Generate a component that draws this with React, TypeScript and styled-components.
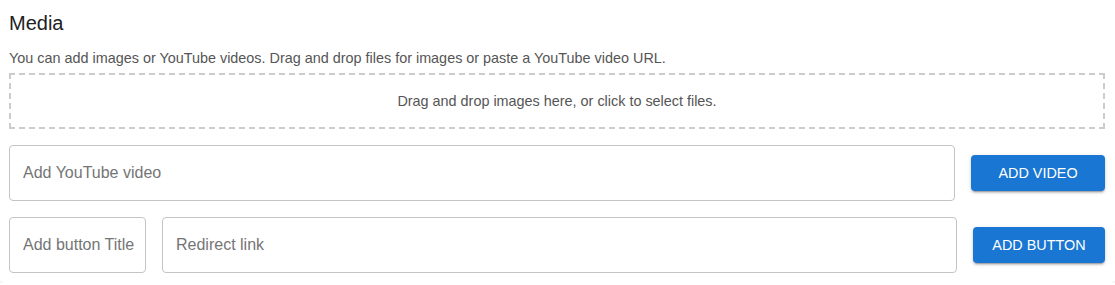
import styled, { createGlobalStyle } from "styled-components";

const GlobalStyle = createGlobalStyle`
  html, body {
    margin: 0;
    padding: 0;
    background: #ffffff;
  }
  body {
    font-family: "Liberation Sans", Arial, sans-serif;
  }
  * {
    box-sizing: border-box;
  }
`;

const App = () => {
  return (
    <>
      <GlobalStyle />
      <Card>
        <Title>Media</Title>
        <Description>
          You can add images or YouTube videos. Drag and drop files for images or paste a YouTube video URL.
        </Description>
        <DropZone>Drag and drop images here, or click to select files.</DropZone>
        <Row>
          <TextInput placeholder="Add YouTube video" />
          <ActionButton $width={134}>Add video</ActionButton>
        </Row>
        <Row>
          <TextInput placeholder="Add button Title" $width={137} />
          <TextInput placeholder="Redirect link" />
          <ActionButton $width={132}>Add button</ActionButton>
        </Row>
      </Card>
    </>
  );
};

export default App;

const Card = styled.div`
  display: flex;
  flex-direction: column;
  padding: 11px 10px 10px 9px;
  background: #ffffff;
  border-radius: 0 0 4px 4px;
  box-shadow: 0 1px 2px rgba(0, 0, 0, 0.12);
`;

const Title = styled.h2`
  margin: 0;
  font-size: 20px;
  line-height: 24px;
  font-weight: 400;
  color: #212121;
`;

const Description = styled.p`
  margin: 13px 0 5px;
  font-size: 14.4px;
  line-height: 20px;
  color: #555555;
`;

const DropZone = styled.div`
  display: flex;
  align-items: center;
  justify-content: center;
  flex: none;
  height: 56px;
  border: 2px dashed #cccccc;
  font-size: 14.4px;
  color: #555555;
  cursor: pointer;
`;

const Row = styled.div`
  display: flex;
  align-items: center;
  gap: 16px;
  margin-top: 16px;
`;

const TextInput = styled.input<{ $width?: number }>`
  ${(p) => (p.$width ? `width: ${p.$width}px; flex: none;` : "flex: 1; min-width: 0;")}
  height: 56px;
  padding: 0 2px 0 13px;
  border: 1px solid #c4c4c4;
  border-radius: 4px;
  font-family: "Liberation Sans", Arial, sans-serif;
  font-size: 16px;
  color: #212121;
  outline: none;
  &::placeholder {
    color: #757575;
  }
`;

const ActionButton = styled.button<{ $width: number }>`
  flex: none;
  width: ${(p) => p.$width}px;
  height: 36px;
  border: none;
  border-radius: 4px;
  background: #1976d2;
  color: #ffffff;
  font-family: "Liberation Sans", Arial, sans-serif;
  font-size: 14.4px;
  text-transform: uppercase;
  box-shadow: 0 3px 1px -2px rgba(0, 0, 0, 0.2), 0 2px 2px 0 rgba(0, 0, 0, 0.14),
    0 1px 5px 0 rgba(0, 0, 0, 0.12);
  cursor: pointer;
`;
